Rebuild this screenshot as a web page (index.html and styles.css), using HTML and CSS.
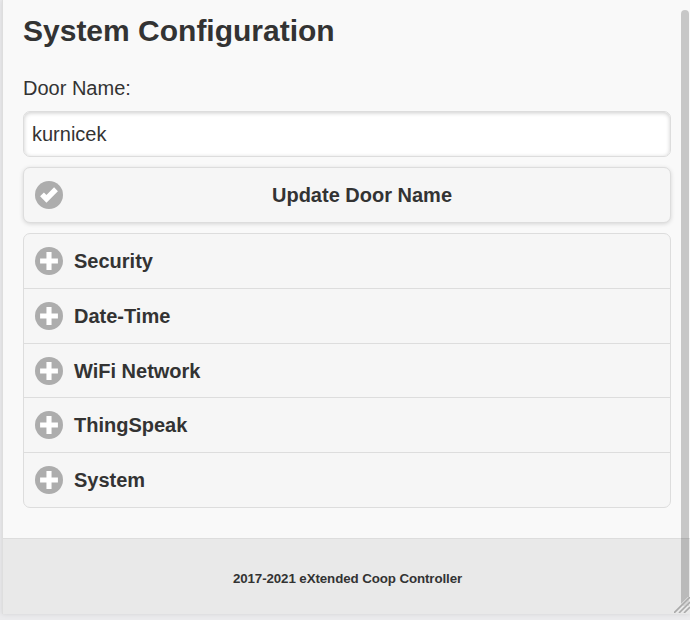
FILE: index.html
```html
<!DOCTYPE html>
<html lang="en">
<head>
<meta charset="utf-8">
<title>System Configuration</title>
<link rel="stylesheet" href="styles.css">
</head>
<body>
<svg class="defs" aria-hidden="true">
  <symbol id="plus" viewBox="-4 -4 22 22"><circle cx="7" cy="7" r="11" fill="#adadad"/><path fill="#fff" d="M14 5H9V0H5v5H0v4h5v5h4V9h5z"/></symbol>
  <symbol id="check" viewBox="-4 -4 22 22"><circle cx="7" cy="7" r="11" fill="#adadad"/><path fill="#fff" d="M14 4l-3-3-5.997 5.997L3 5 0 8l5 5z"/></symbol>
</svg>
<div class="page">
  <main class="content">
    <h2 class="title">System Configuration</h2>
    <label class="label" for="door">Door Name:</label>
    <input class="field" id="door" type="text" value="kurnicek">
    <button class="button" type="button"><svg class="icon"><use href="#check"/></svg><span class="caption">Update Door Name</span></button>
    <div class="sections">
      <h4 class="section"><svg class="icon"><use href="#plus"/></svg>Security</h4>
      <h4 class="section"><svg class="icon"><use href="#plus"/></svg>Date-Time</h4>
      <h4 class="section"><svg class="icon"><use href="#plus"/></svg>WiFi Network</h4>
      <h4 class="section"><svg class="icon"><use href="#plus"/></svg>ThingSpeak</h4>
      <h4 class="section"><svg class="icon"><use href="#plus"/></svg>System</h4>
    </div>
  </main>
  <footer class="footer">2017-2021 eXtended Coop Controller</footer>
  <div class="scrollbar"></div>
  <svg class="grip" viewBox="0 0 16 16"><path d="M0 16L16 0M5 16L16 5M10 16l6-6" fill="none" stroke="#e9e9e9" stroke-width="3"/><path d="M0 16L16 0M5 16L16 5M10 16l6-6" fill="none" stroke="#aaa" stroke-width="1.6"/></svg>
</div>
</body>
</html>
```
FILE: styles.css
```css
* { box-sizing: border-box; }
body {
  margin: 0;
  height: 620px;
  overflow: hidden;
  padding-left: 2px;
  background: #ebebed;
  color: #333;
  font: 20px/26px "Liberation Sans", Arial, sans-serif;
}
.defs { position: absolute; width: 0; height: 0; }
.page {
  position: relative;
  height: 614px;
  display: flex;
  flex-direction: column;
  background: #f9f9f9;
  border-left: 1px solid #dedede;
  box-shadow: 0 0 5px rgba(0, 0, 0, .1);
}
.content {
  display: flex;
  flex-direction: column;
  height: 538px;
  padding: 11px 19px 0 20px;
}
.title { margin: 0 0 25px; font-size: 30px; line-height: 39px; }
.label { margin-bottom: 10px; }
.field {
  height: 46px;
  margin: 0 0 10px;
  padding: 0 8px;
  border: 1px solid #ddd;
  border-radius: 7px;
  background: #fff;
  color: #333;
  font: inherit;
  box-shadow: inset 0 1px 4px rgba(0, 0, 0, .2);
  outline: 0;
}
.button {
  display: flex;
  align-items: center;
  height: 56px;
  margin: 0 0 10px;
  padding: 0 20px 0 11px;
  border: 1px solid #ddd;
  border-radius: 7px;
  background: #f6f6f6;
  color: #333;
  font: inherit;
  font-weight: 700;
  box-shadow: 0 1px 4px rgba(0, 0, 0, .15);
}
.caption { flex: 1; margin-left: 11px; }
.icon { flex: none; width: 28px; height: 28px; }
.sections {
  display: grid;
  grid-template-rows: 54px 55px 54px 55px 55px;
  height: 275px;
  border: 1px solid #ddd;
  border-radius: 7px;
  background: #f6f6f6;
}
.section {
  display: flex;
  align-items: center;
  gap: 11px;
  margin: 0;
  padding-left: 11px;
  font-size: 20px;
}
.section + .section { border-top: 1px solid #ddd; }
.footer {
  flex: 1;
  display: flex;
  align-items: center;
  justify-content: center;
  padding: 4px 0 0 2px;
  border-top: 1px solid #ddd;
  background: #e9e9e9;
  font-size: 13.33px;
  letter-spacing: -.1px;
  font-weight: 700;
}
.scrollbar {
  position: absolute;
  top: 10px;
  right: 1px;
  width: 8px;
  height: 596px;
  border-radius: 4px 4px 0 0;
  background: rgba(0, 0, 0, .2);
}
.grip { position: absolute; right: 0; bottom: 1px; width: 16px; height: 16px; }
```
